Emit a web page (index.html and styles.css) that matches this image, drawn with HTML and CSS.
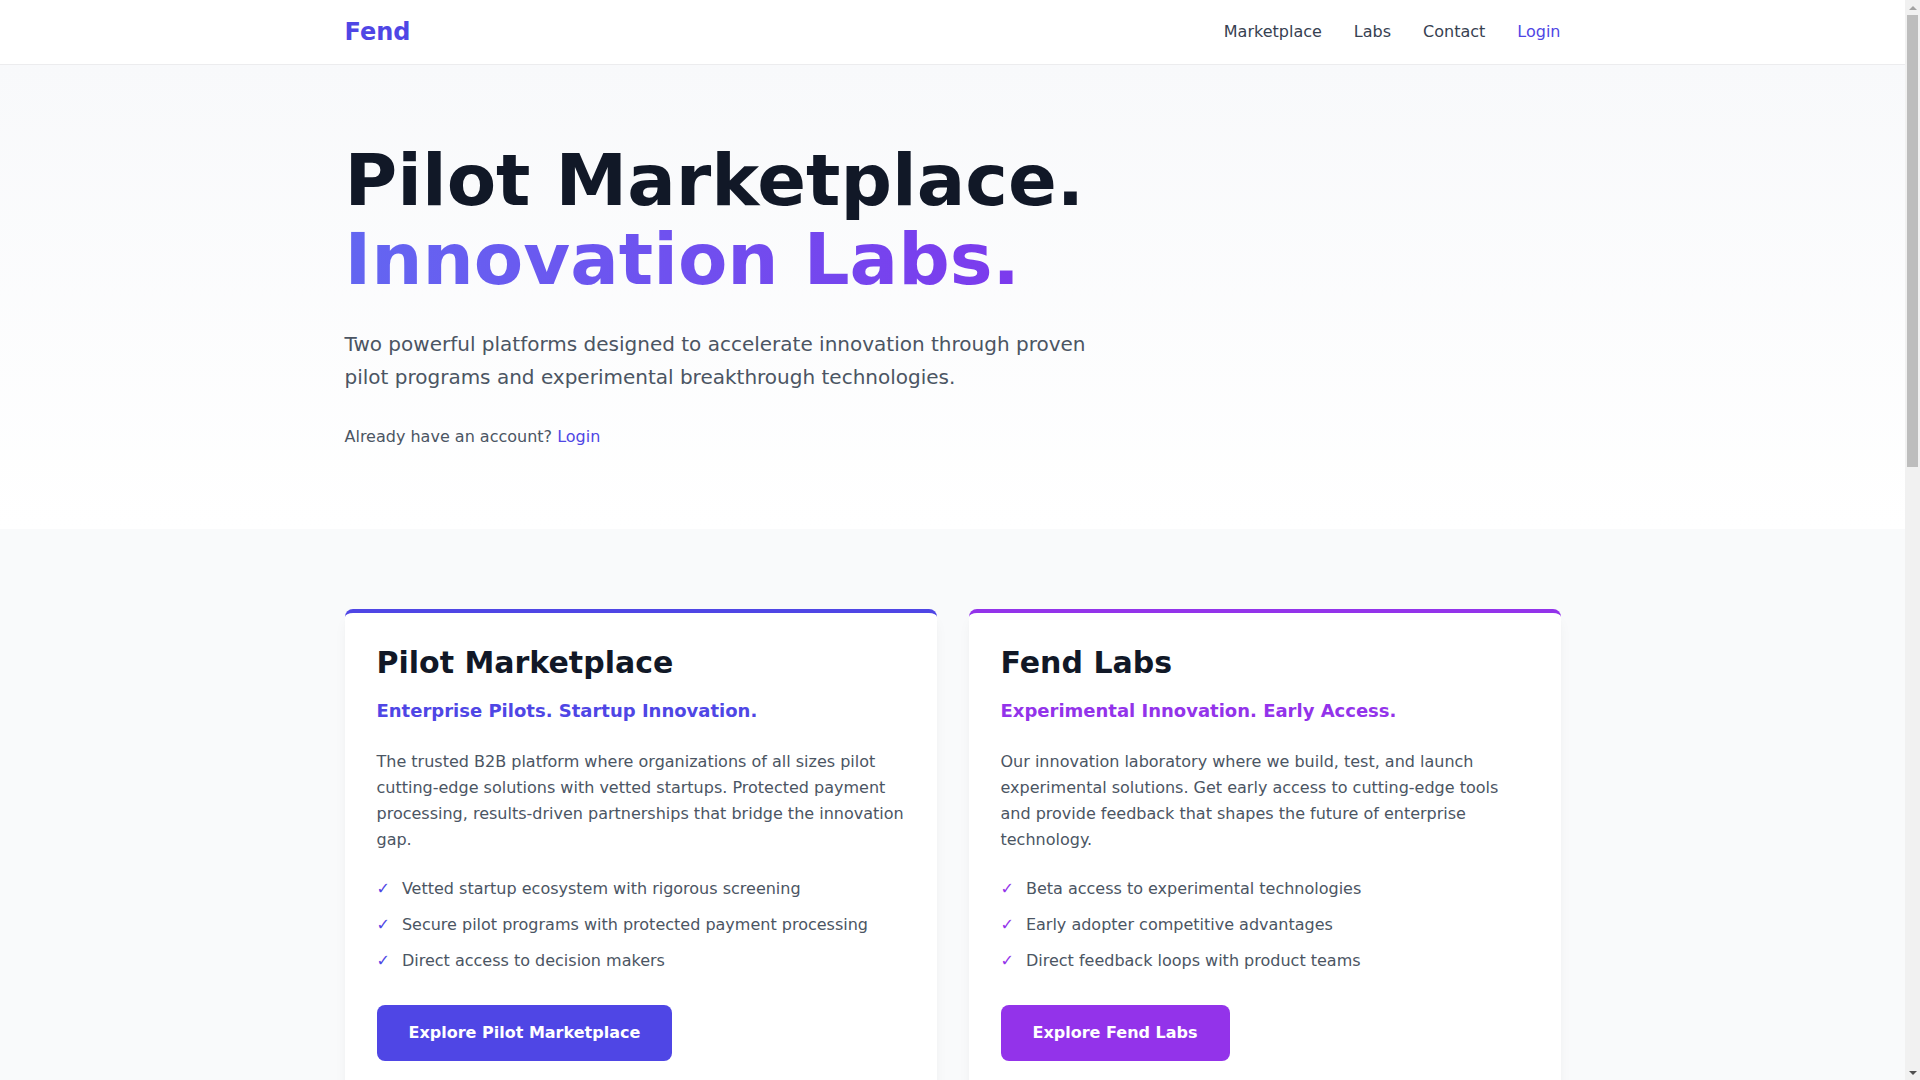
FILE: index.html
```html
<!DOCTYPE html>
<html lang="en">
<head>
<meta charset="utf-8">
<title>Fend</title>
<link rel="stylesheet" href="styles.css">
</head>
<body>
<nav class="nav">
  <div class="container nav-inner">
    <a class="logo" href="#">Fend</a>
    <div class="nav-links">
      <a class="nav-link" href="#">Marketplace</a>
      <a class="nav-link" href="#">Labs</a>
      <a class="nav-link" href="#">Contact</a>
      <a class="nav-link nav-login" href="#">Login</a>
    </div>
  </div>
</nav>
<main class="main">
  <section class="hero">
    <div class="container">
      <h1 class="hero-title">Pilot Marketplace.<br><span class="gradient">Innovation Labs.</span></h1>
      <p class="hero-text">Two powerful platforms designed to accelerate innovation through proven pilot programs and experimental breakthrough technologies.</p>
      <p class="hero-account">Already have an account? <a class="link" href="#">Login</a></p>
    </div>
  </section>
  <section class="products">
    <div class="container cards">
      <div class="card card-indigo">
        <h2 class="card-title">Pilot Marketplace</h2>
        <p class="card-sub sub-indigo">Enterprise Pilots. Startup Innovation.</p>
        <p class="card-text">The trusted B2B platform where organizations of all sizes pilot cutting-edge solutions with vetted startups. Protected payment processing, results-driven partnerships that bridge the innovation gap.</p>
        <ul class="features">
          <li class="feature"><span class="check check-indigo">✓</span>Vetted startup ecosystem with rigorous screening</li>
          <li class="feature"><span class="check check-indigo">✓</span>Secure pilot programs with protected payment processing</li>
          <li class="feature"><span class="check check-indigo">✓</span>Direct access to decision makers</li>
        </ul>
        <a class="btn btn-indigo" href="#">Explore Pilot Marketplace</a>
      </div>
      <div class="card card-purple">
        <h2 class="card-title">Fend Labs</h2>
        <p class="card-sub sub-purple">Experimental Innovation. Early Access.</p>
        <p class="card-text">Our innovation laboratory where we build, test, and launch experimental solutions. Get early access to cutting-edge tools and provide feedback that shapes the future of enterprise technology.</p>
        <ul class="features">
          <li class="feature"><span class="check check-purple">✓</span>Beta access to experimental technologies</li>
          <li class="feature"><span class="check check-purple">✓</span>Early adopter competitive advantages</li>
          <li class="feature"><span class="check check-purple">✓</span>Direct feedback loops with product teams</li>
        </ul>
        <a class="btn btn-purple" href="#">Explore Fend Labs</a>
      </div>
    </div>
  </section>
</main>
<div class="scrollbar" aria-hidden="true">
  <div class="sb-up"></div>
  <div class="sb-thumb"></div>
  <div class="sb-space"></div>
  <div class="sb-down"></div>
</div>
</body>
</html>
```

FILE: styles.css
```css
* { box-sizing: border-box; }
html, body { padding: 0; }
html { margin: 0; }
body {
  margin: 0 15px 0 0;
  font-family: "DejaVu Sans", "Noto Sans", sans-serif;
  color: #111827;
  background: #f9fafb;
  font-size: 16px;
  line-height: 24px;
}
a { text-decoration: none; }
.container {
  max-width: 1280px;
  margin: 0 auto;
  padding: 0 32px;
}
.nav {
  background: #ffffff;
  border-bottom: 1px solid #ececee;
}
.nav-inner {
  height: 64px;
  display: flex;
  align-items: center;
  justify-content: space-between;
}
.logo {
  font-size: 24px;
  line-height: 32px;
  font-weight: 700;
  color: #4f46e5;
}
.nav-links {
  display: flex;
  gap: 32px;
}
.nav-link {
  color: #374151;
  font-size: 16px;
  line-height: 24px;
}
.nav-login { color: #4f46e5; }
.main { min-height: 2440px; }
.hero {
  background: linear-gradient(to bottom, #f8f9fb, #ffffff);
  padding: 76px 0 80px;
}
.hero-title {
  margin: 0 0 29px;
  font-size: 72px;
  line-height: 79.2px;
  font-weight: 700;
  color: #111827;
}
.gradient {
  background: linear-gradient(to right, #6366f1, #7c3aed);
  -webkit-background-clip: text;
  background-clip: text;
  color: transparent;
}
.hero-text {
  margin: 0 0 32px;
  max-width: 768px;
  font-size: 20px;
  line-height: 32.5px;
  color: #4b5563;
}
.hero-account {
  margin: 0;
  color: #4b5563;
}
.link { color: #4f46e5; }
.products {
  padding: 80px 0 80px;
}
.cards {
  display: grid;
  grid-template-columns: 1fr 1fr;
  gap: 32px;
}
.card {
  background: #ffffff;
  border-radius: 8px;
  border-top: 4px solid #4f46e5;
  padding: 32px;
  box-shadow: 0 10px 15px -3px rgba(0,0,0,0.06), 0 4px 6px -4px rgba(0,0,0,0.06);
}
.card-purple { border-top-color: #9333ea; }
.card-title {
  margin: 0 0 16px;
  font-size: 30px;
  line-height: 36px;
  font-weight: 700;
  color: #111827;
}
.card-sub {
  margin: 0 0 24px;
  font-size: 18px;
  line-height: 28px;
  font-weight: 700;
}
.sub-indigo { color: #4f46e5; }
.sub-purple { color: #9333ea; }
.card-text {
  margin: 0 0 24px;
  font-size: 16px;
  line-height: 26px;
  color: #4b5563;
}
.features {
  list-style: none;
  margin: 0 0 32px;
  padding: 0;
  display: flex;
  flex-direction: column;
  gap: 12px;
}
.feature {
  display: flex;
  align-items: center;
  color: #4b5563;
  font-size: 16px;
  line-height: 24px;
}
.check { margin-right: 12px; }
.check-indigo { color: #4f46e5; }
.check-purple { color: #9333ea; }
.btn {
  display: inline-block;
  padding: 16px 32px;
  border-radius: 8px;
  color: #ffffff;
  font-weight: 700;
  font-size: 16px;
  line-height: 24px;
}
.btn-indigo { background: #4f46e5; }
.btn-purple { background: #9333ea; }

/* window scrollbar */
.scrollbar {
  position: fixed;
  top: 0;
  right: 0;
  width: 15px;
  height: 100vh;
  background: #f1f1f1;
  display: flex;
  flex-direction: column;
  align-items: center;
}
.sb-up, .sb-down {
  width: 15px;
  height: 15px;
  display: flex;
  justify-content: center;
  align-items: center;
  flex-shrink: 0;
}
.sb-up::before {
  content: "";
  border-left: 4px solid transparent;
  border-right: 4px solid transparent;
  border-bottom: 4px solid #a3a3a3;
}
.sb-down::before {
  content: "";
  border-left: 4px solid transparent;
  border-right: 4px solid transparent;
  border-top: 4px solid #505050;
}
.sb-thumb {
  width: 11px;
  height: 452px;
  background: #bdbdbd;
  flex-shrink: 0;
}
.sb-space { flex: 1; }
```
